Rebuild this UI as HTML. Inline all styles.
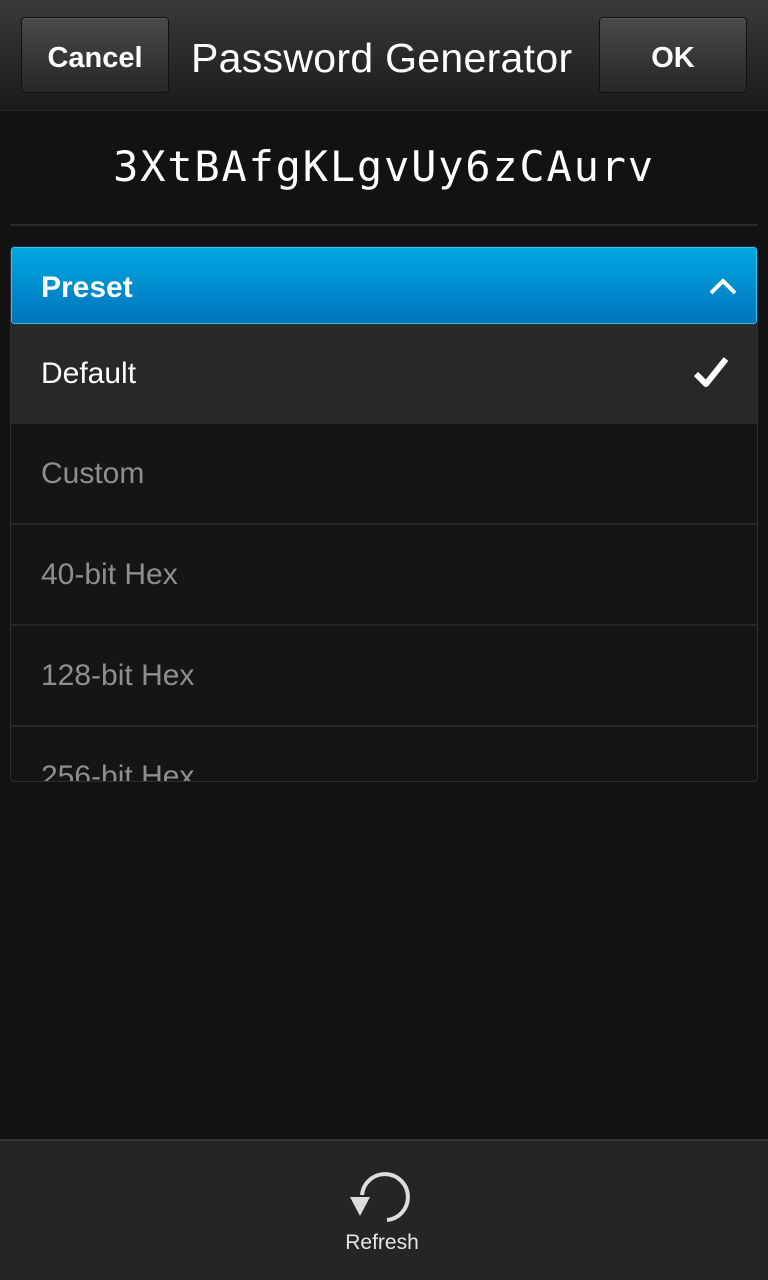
<!DOCTYPE html>
<html><head><meta charset="utf-8"><style>
*{margin:0;padding:0;box-sizing:border-box}
body{width:768px;height:1280px;background:#121212;font-family:"Liberation Sans","DejaVu Sans",sans-serif;color:#fff;position:relative;overflow:hidden}
.top{position:absolute;left:0;top:0;width:768px;height:111px;background:linear-gradient(#3a3a3a,#1a1a1a);border-bottom:1px solid #2a2a2a}
.btn{position:absolute;top:17px;height:76px;border:1px solid #111;border-radius:4px;background:linear-gradient(#4a4a4a,#262626);font-weight:bold;font-size:29px;display:flex;align-items:center;justify-content:center;box-shadow:inset 0 1px 0 #5a5a5a;padding-top:6px}
.title{position:absolute;left:191px;top:35px;font-size:41px;letter-spacing:0.3px}
.pw{position:absolute;left:0;width:768px;top:142px;text-align:center;font-family:"DejaVu Sans Mono","Liberation Mono",monospace;font-size:42px;letter-spacing:1.8px}
.sep{position:absolute;left:10px;width:748px;top:224px;height:2px;background:#2a2a2a}
.list{position:absolute;left:10px;top:246px;width:748px;height:536px;border:1px solid #2e2e2e;border-radius:4px;overflow:hidden;background:#151515}
.hdr{height:77px;background:linear-gradient(#00a8e0,#0074bc);border:1px solid #3bbcec;border-radius:3px;position:relative}
.hdr span{position:absolute;left:29px;top:23px;font-weight:bold;font-size:30px}
.row{height:101px;border-bottom:2px solid #262626;position:relative;font-size:30px;color:#8e8e8e}
.row span{position:absolute;left:30px;top:33px}
.sel{background:#282828;color:#fff;border-bottom:none;height:100px}
.bot{position:absolute;left:0;top:1139px;width:768px;height:141px;background:#252525;border-top:2px solid #333}
.bot div{position:absolute;width:764px;text-align:center;top:90px;font-size:21px;color:#e6e6e6}
</style></head><body>
<div class="top">
<div class="btn" style="left:21px;width:148px">Cancel</div>
<div class="title">Password Generator</div>
<div class="btn" style="left:599px;width:148px">OK</div>
</div>
<div class="pw">3XtBAfgKLgvUy6zCAurv</div>
<div class="sep"></div>
<div class="list">
<div class="hdr"><span>Preset</span>
<svg style="position:absolute;right:18px;top:28px" width="30" height="20" viewBox="0 0 30 20"><path d="M3 17 L15 5 L27 17" fill="none" stroke="#fff" stroke-width="4"/></svg></div>
<div class="row sel"><span>Default</span>
<svg style="position:absolute;right:28px;top:32px" width="36" height="32" viewBox="0 0 36 32"><path d="M3 18 L13 28 L33 3" fill="none" stroke="#fff" stroke-width="6" stroke-linejoin="round"/></svg></div>
<div class="row"><span>Custom</span></div>
<div class="row"><span>40-bit Hex</span></div>
<div class="row"><span>128-bit Hex</span></div>
<div class="row"><span>256-bit Hex</span></div>
</div>
<div class="bot">
<svg style="position:absolute;left:345px;top:28px" width="70" height="60" viewBox="0 0 70 60">
<path d="M17 26 A23 23 0 1 1 42 51" fill="none" stroke="#ddd" stroke-width="4"/>
<path d="M5 28 L25 28 L15 47 Z" fill="#ddd"/>
</svg>
<div>Refresh</div>
</div>
</body></html>
